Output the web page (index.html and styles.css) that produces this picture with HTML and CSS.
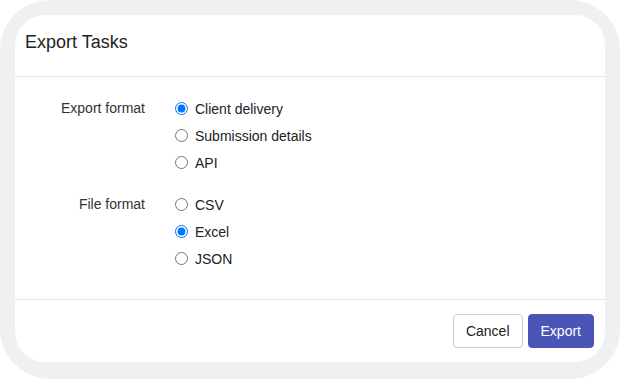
FILE: index.html
```html
<!DOCTYPE html>
<html lang="en">
<head>
    <meta charset="UTF-8">
    <meta name="viewport" content="width=device-width, initial-scale=1.0">
    <title>Export Tasks</title>
    <link rel="stylesheet" href="styles.css">
</head>
<body>
    <div class="dialog">
        <div class="dialog-header">Export Tasks</div>
        <div class="dialog-body">
            <div class="field">
                <div class="field-label">Export format</div>
                <div class="options">
                    <label class="option"><input type="radio" name="kind" checked>Client delivery</label>
                    <label class="option"><input type="radio" name="kind">Submission details</label>
                    <label class="option"><input type="radio" name="kind">API</label>
                </div>
            </div>
            <div class="field">
                <div class="field-label">File format</div>
                <div class="options">
                    <label class="option"><input type="radio" name="file">CSV</label>
                    <label class="option"><input type="radio" name="file" checked>Excel</label>
                    <label class="option"><input type="radio" name="file">JSON</label>
                </div>
            </div>
        </div>
        <div class="dialog-footer">
            <button class="btn">Cancel</button>
            <button class="btn btn-primary">Export</button>
        </div>
    </div>
</body>
</html>
```

FILE: styles.css
```css
html {
    background: #fff;
}
body {
    margin: 0;
    height: 379px;
    box-sizing: border-box;
    padding: 15px 15px 17px;
    background: #eff0f2;
    border-radius: 50px;
    font-family: "Liberation Sans", Arial, sans-serif;
    color: #333;
}
.dialog {
    height: 100%;
    display: flex;
    flex-direction: column;
    background: #fff;
    border-radius: 30px;
    overflow: hidden;
}
.dialog-header {
    height: 62px;
    box-sizing: border-box;
    padding: 17px 10px 0;
    font-size: 18px;
    color: #222;
    border-bottom: 1px solid #e3e4e6;
}
.dialog-body {
    flex: 1;
    padding: 18px 0 0 15px;
    display: flex;
    flex-direction: column;
    gap: 15px;
}
.field {
    display: grid;
    grid-template-columns: 115px 1fr;
    column-gap: 25px;
    font-size: 14px;
}
.field-label {
    text-align: right;
    line-height: 27px;
}
.option {
    display: flex;
    align-items: center;
    height: 27px;
    color: #222;
}
.option input {
    margin: 0 7px 0 5px;
    width: 13px;
    height: 13px;
}
.dialog-footer {
    height: 63px;
    box-sizing: border-box;
    border-top: 1px solid #e3e4e6;
    display: flex;
    justify-content: flex-end;
    align-items: center;
    gap: 5px;
    padding: 0 11px 0 0;
}
.btn {
    height: 34px;
    padding: 0 12px;
    font-family: inherit;
    font-size: 14px;
    color: #222;
    background: #fff;
    border: 1px solid #ccc;
    border-radius: 4px;
}
.btn-primary {
    color: #fff;
    background: #4a55b8;
    border-color: #4a55b8;
}
```
